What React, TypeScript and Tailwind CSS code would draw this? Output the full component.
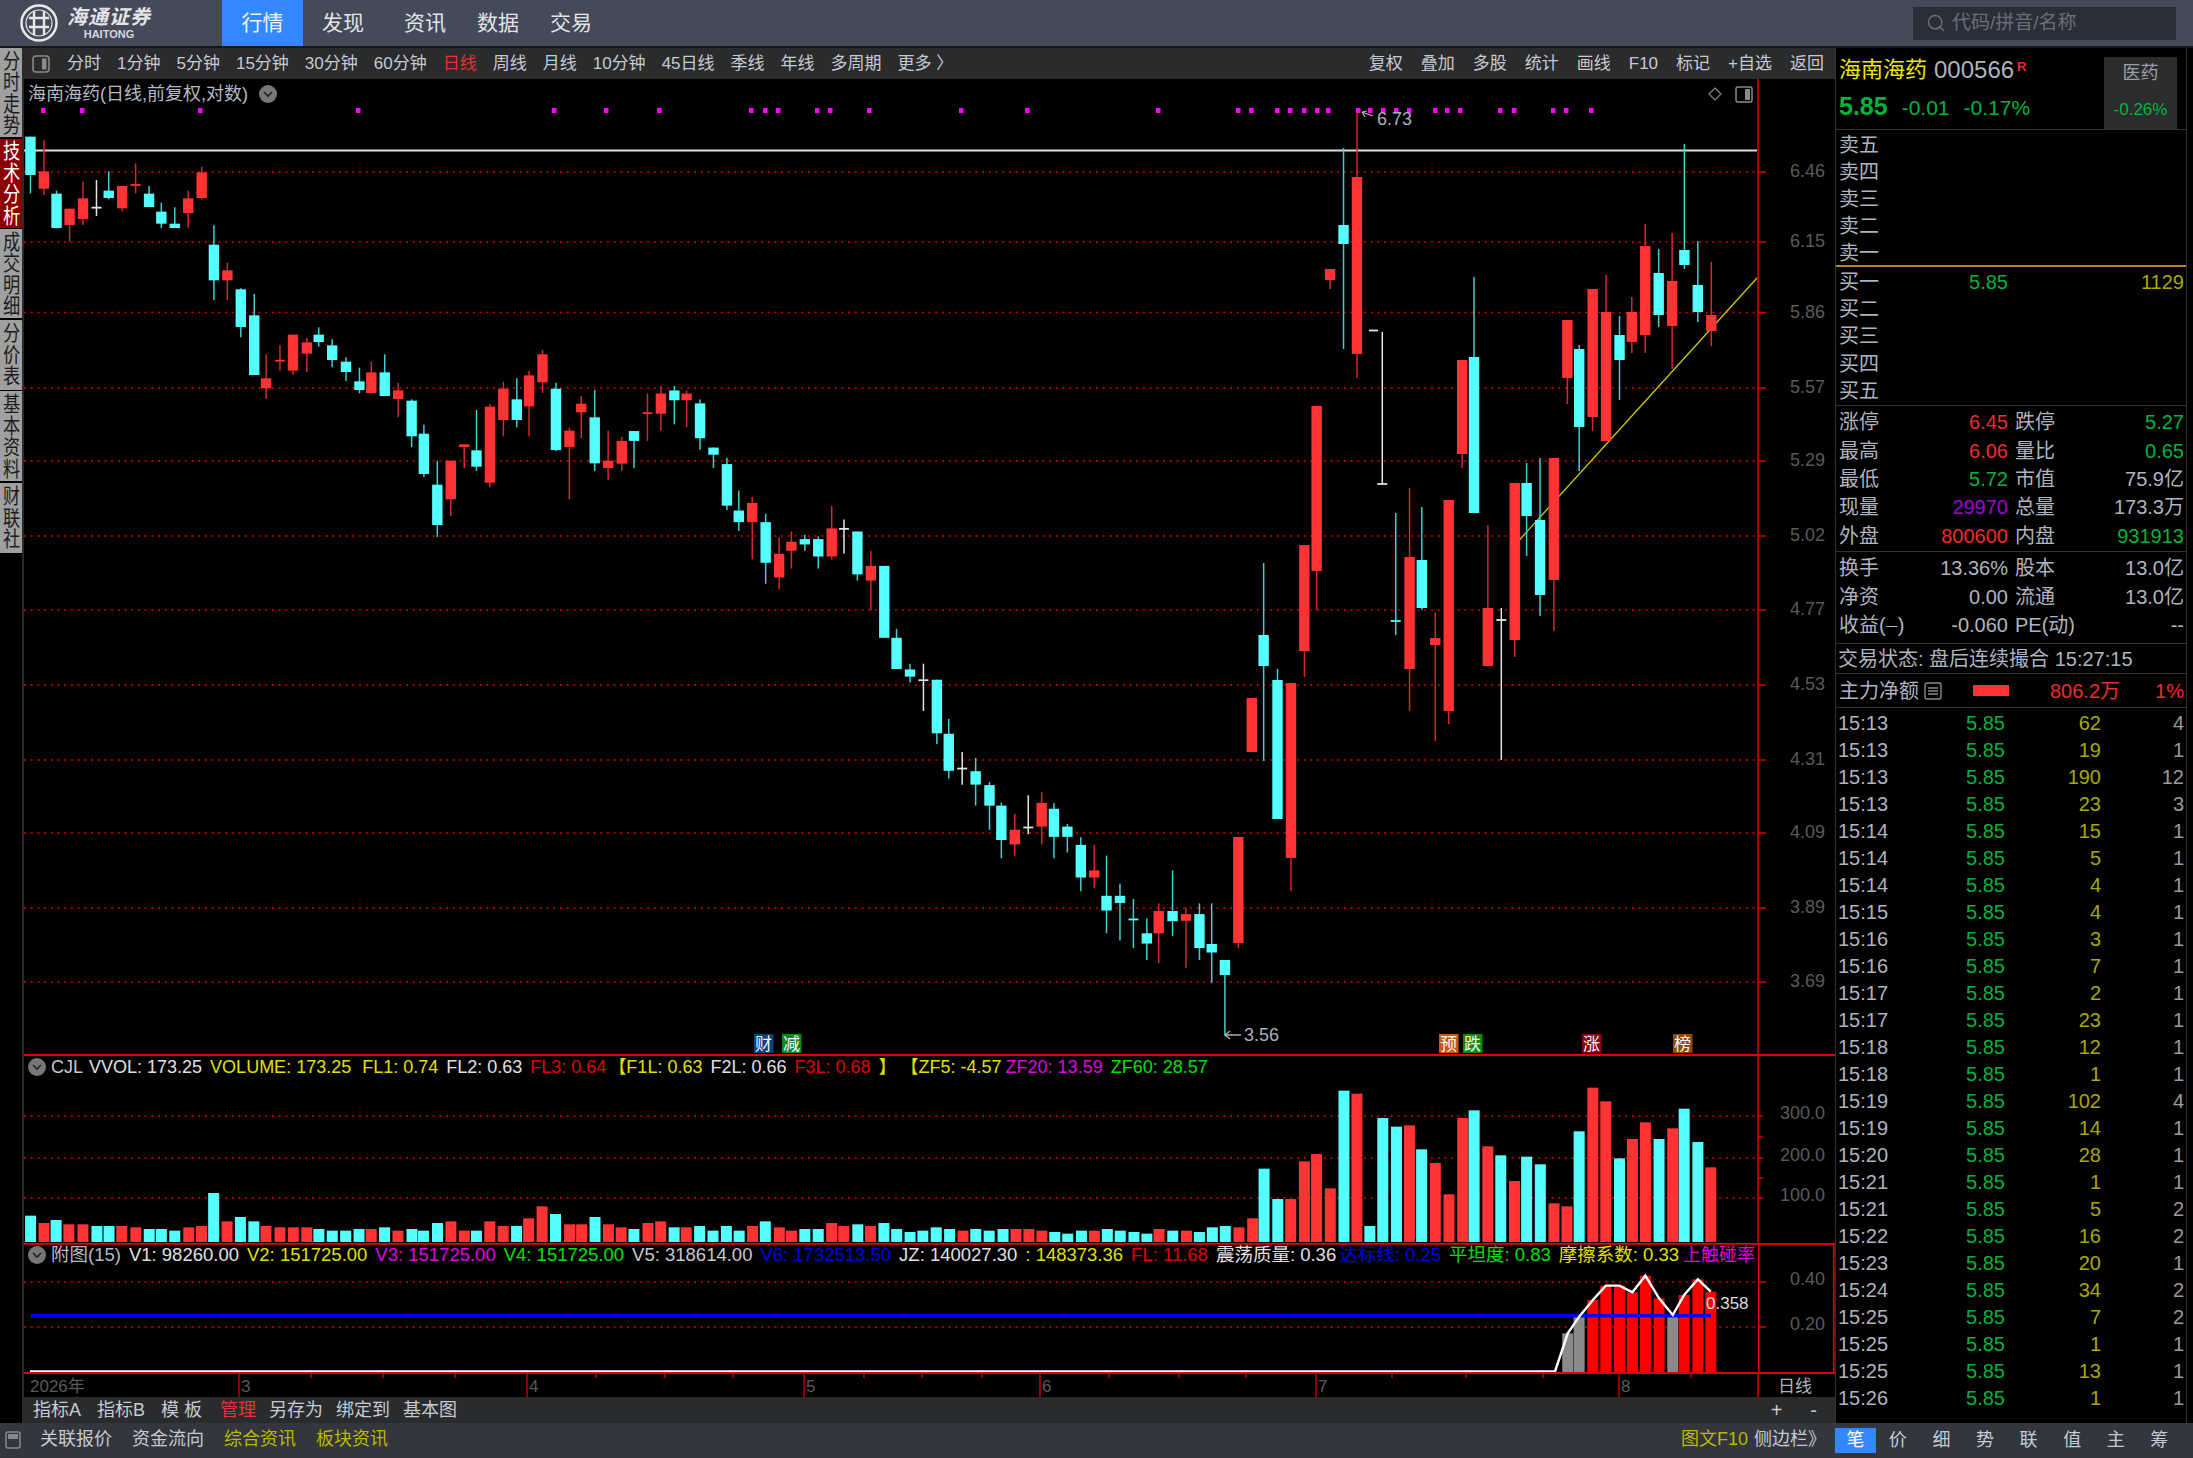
import type { ReactNode } from 'react';
import { Search } from 'lucide-react';

type Kind = 'c' | 'r' | 'w';
type Row = [number, number, number, number, number, Kind];

const CYAN = '#55ffff';
const RED = '#ff3333';

// candles are read off the chart in three stretches, each with its own scale
const part1: Row[] = [
  [77, 20, 190, 20, 135, 'c'], [111, 30, 195, 124, 176, 'r'], [143, 182, 295, 191, 294, 'c'], [176, 236, 335, 236, 285, 'r'],
  [210, 155, 285, 205, 267, 'r'], [244, 150, 258, 233, 233, 'w'], [275, 124, 208, 182, 204, 'c'], [309, 168, 244, 168, 235, 'r'],
  [343, 100, 190, 165, 165, 'r'], [377, 168, 231, 191, 231, 'c'], [408, 218, 294, 245, 281, 'c'], [442, 232, 294, 281, 294, 'c'],
  [476, 182, 294, 205, 249, 'r'], [510, 110, 208, 127, 204, 'r'], [541, 286, 510, 344, 451, 'c'], [575, 398, 510, 421, 451, 'r'],
  [609, 475, 622, 478, 591, 'c'], [643, 492, 735, 556, 735, 'c'], [673, 673, 806, 745, 775, 'r'], [708, 646, 722, 692, 692, 'r'],
  [741, 614, 735, 614, 722, 'r'], [776, 623, 726, 637, 671, 'r'], [806, 592, 650, 614, 636, 'c'], [840, 628, 712, 646, 690, 'c'],
  [875, 682, 753, 695, 726, 'c'], [909, 713, 790, 754, 780, 'c'], [939, 695, 790, 727, 789, 'r'], [973, 673, 798, 727, 798, 'c'],
  [1007, 758, 861, 781, 807, 'r'], [1041, 808, 951, 812, 919, 'c'], [1072, 884, 1041, 911, 1032, 'c'], [1106, 992, 1221, 1064, 1185, 'c'],
  [1140, 992, 1158, 992, 1108, 'r'], [1174, 943, 1014, 943, 951, 'r'], [1205, 840, 1023, 961, 1010, 'c'], [1239, 822, 1072, 830, 1058, 'r'],
  [1273, 755, 919, 776, 870, 'r'], [1307, 745, 892, 808, 870, 'c'], [1338, 722, 919, 736, 829, 'r'], [1372, 660, 789, 673, 757, 'r'],
  [1406, 758, 964, 776, 960, 'c'], [1440, 893, 1108, 902, 951, 'r'], [1470, 798, 924, 821, 847, 'r'], [1504, 780, 1023, 862, 1000, 'c'],
  [1538, 902, 1050, 992, 1014, 'r'],
];

const part2: Row[] = [
  [55, 217, 293, 226, 277, 'r'], [86, 204, 287, 204, 226, 'c'], [120, 120, 226, 164, 164, 'r'], [154, 103, 203, 120, 165, 'r'],
  [188, 103, 189, 113, 135, 'c'], [219, 113, 195, 120, 135, 'r'], [253, 133, 246, 142, 220, 'c'], [287, 241, 287, 241, 257, 'c'],
  [321, 264, 381, 278, 371, 'c'], [351, 337, 428, 382, 408, 'c'], [385, 351, 491, 365, 408, 'r'], [419, 389, 546, 408, 499, 'c'],
  [453, 442, 559, 479, 532, 'r'], [484, 429, 512, 452, 472, 'r'], [518, 436, 472, 446, 458, 'c'], [552, 440, 512, 446, 485, 'c'],
  [586, 372, 492, 422, 485, 'r'], [617, 402, 478, 423, 423, 'w'], [651, 429, 539, 429, 525, 'c'], [685, 472, 605, 506, 539, 'r'],
  [719, 506, 667, 506, 667, 'c'], [750, 647, 737, 667, 737, 'c'], [784, 725, 767, 738, 754, 'c'], [818, 725, 831, 762, 762, 'w'],
  [852, 761, 905, 761, 881, 'c'], [882, 849, 982, 882, 965, 'c'], [916, 923, 996, 960, 960, 'w'], [950, 936, 1043, 966, 996, 'c'],
  [985, 990, 1097, 997, 1043, 'c'], [1015, 1036, 1161, 1043, 1120, 'c'], [1049, 1061, 1155, 1097, 1130, 'r'], [1083, 1020, 1107, 1092, 1092, 'w'],
  [1117, 1013, 1130, 1037, 1090, 'r'], [1148, 1037, 1161, 1050, 1113, 'c'], [1182, 1084, 1148, 1090, 1113, 'c'], [1216, 1114, 1235, 1131, 1204, 'c'],
  [1250, 1131, 1228, 1188, 1204, 'r'], [1281, 1155, 1329, 1245, 1278, 'c'], [1315, 1218, 1345, 1245, 1261, 'c'], [1349, 1252, 1362, 1298, 1298, 'c'],
  [1383, 1296, 1389, 1329, 1352, 'c'], [1413, 1262, 1396, 1279, 1329, 'r'], [1448, 1188, 1335, 1279, 1302, 'c'], [1482, 1272, 1406, 1286, 1301, 'r'],
  [1516, 1262, 1389, 1286, 1362, 'c'], [1547, 1262, 1440, 1353, 1372, 'c'],
];

const part3: Row[] = [
  [63, 960, 1036, 960, 975, 'c'], [97, 837, 948, 837, 943, 'r'], [131, 698, 752, 698, 752, 'r'], [161, 563, 761, 635, 666, 'c'],
  [196, 669, 819, 680, 819, 'c'], [230, 683, 891, 683, 858, 'r'], [264, 545, 677, 545, 651, 'r'], [295, 406, 610, 406, 571, 'r'],
  [329, 269, 289, 269, 280, 'r'], [363, 148, 349, 225, 244, 'c'], [397, 112, 378, 177, 354, 'r'], [461, 332, 484, 484, 484, 'w'],
  [495, 513, 635, 621, 621, 'c'], [530, 488, 711, 557, 669, 'r'], [561, 507, 610, 560, 608, 'c'], [595, 613, 741, 638, 645, 'r'],
  [629, 500, 724, 500, 711, 'r'], [663, 360, 468, 360, 454, 'r'], [693, 277, 513, 357, 513, 'c'], [728, 525, 666, 608, 666, 'r'],
  [762, 608, 760, 620, 620, 'w'], [796, 483, 657, 483, 640, 'r'], [826, 463, 556, 483, 516, 'c'], [860, 458, 616, 520, 595, 'c'],
  [895, 458, 631, 458, 580, 'r'], [929, 320, 404, 320, 378, 'r'], [959, 345, 471, 349, 427, 'c'], [993, 289, 431, 289, 417, 'r'],
  [1027, 275, 441, 312, 441, 'r'], [1061, 316, 400, 335, 360, 'c'], [1092, 297, 353, 312, 342, 'r'], [1126, 224, 353, 246, 335, 'r'],
  [1160, 249, 327, 273, 315, 'c'], [1194, 233, 369, 281, 326, 'r'], [1225, 144, 269, 250, 265, 'c'], [1259, 241, 322, 285, 312, 'c'],
  [1293, 262, 346, 315, 331, 'r'],
];

const candles: Row[] = [
  ...part1.map(([x, h, l, t, b, k]): Row => [x / 2.529, 130 + h / 3, 130 + l / 3, 130 + t / 3, 130 + b / 3, k]),
  ...part2.map(([x, h, l, t, b, k]): Row => [600 + x / 2.529, 340 + h / 2.24, 340 + l / 2.24, 340 + t / 2.24, 340 + b / 2.24, k]),
  ...part3.map(([x, h, l, t, b, k]): Row => [1200 + x / 2.529, h, l, t, b, k]),
];

const priceGrid: [number, string][] = [
  [172, '6.46'], [242, '6.15'], [312.5, '5.86'], [388, '5.57'], [461, '5.29'], [536, '5.02'],
  [610, '4.77'], [685, '4.53'], [760, '4.31'], [833, '4.09'], [908, '3.89'], [982, '3.69'],
];

const dots = [
  43, 82, 200, 358, 554, 606, 659, 751, 765, 778, 817, 830, 869, 961, 1027, 1158, 1238, 1251, 1277, 1290, 1304, 1317,
  1328, 1358, 1370, 1383, 1396, 1409, 1435, 1447, 1460, 1500, 1514, 1553, 1566, 1591,
];

const volA: [number, number, 'c' | 'r'][] = [
  [48, 527, 'c'], [69, 549, 'r'], [88, 540, 'c'], [108, 553, 'r'], [130, 553, 'r'], [152, 558, 'c'], [171, 558, 'c'], [191, 558, 'r'],
  [213, 562, 'r'], [234, 567, 'c'], [253, 567, 'c'], [274, 572, 'c'], [296, 562, 'r'], [316, 558, 'r'], [335, 459, 'c'], [356, 544, 'r'],
  [377, 531, 'c'], [398, 544, 'c'], [417, 558, 'r'], [439, 562, 'r'], [460, 562, 'r'], [481, 562, 'r'], [500, 567, 'c'], [521, 572, 'c'],
  [542, 572, 'c'], [563, 567, 'c'], [582, 567, 'r'], [603, 562, 'c'], [624, 572, 'r'], [646, 567, 'c'], [664, 572, 'c'], [686, 549, 'c'],
  [707, 544, 'r'], [728, 572, 'r'], [747, 572, 'c'], [768, 544, 'r'], [789, 558, 'r'], [810, 558, 'c'], [829, 535, 'r'], [850, 499, 'r'],
  [871, 522, 'c'], [893, 553, 'r'], [912, 553, 'r'], [933, 531, 'c'], [954, 553, 'r'], [974, 562, 'r'], [994, 567, 'c'], [1016, 549, 'r'],
  [1036, 544, 'r'], [1057, 562, 'c'], [1076, 562, 'r'], [1097, 558, 'c'], [1118, 572, 'c'], [1139, 558, 'c'], [1159, 572, 'c'], [1180, 558, 'r'],
  [1200, 544, 'c'], [1222, 562, 'r'], [1241, 572, 'r'], [1262, 567, 'c'], [1283, 567, 'c'], [1304, 549, 'r'], [1323, 558, 'r'], [1345, 553, 'c'],
  [1365, 558, 'r'], [1386, 549, 'c'], [1406, 567, 'c'], [1427, 576, 'c'], [1447, 572, 'c'], [1468, 562, 'c'], [1489, 567, 'c'], [1510, 572, 'r'],
  [1530, 567, 'c'], [1551, 572, 'c'],
];

const volB: [number, number, 'c' | 'r'][] = [
  [4, 567, 'c'], [21, 567, 'r'], [38, 567, 'r'], [55, 572, 'r'], [72, 576, 'c'], [89, 581, 'c'], [107, 572, 'c'], [124, 572, 'r'],
  [141, 567, 'c'], [158, 572, 'c'], [176, 576, 'c'], [193, 581, 'c'], [209, 567, 'r'], [227, 572, 'c'], [245, 572, 'r'], [262, 576, 'c'],
  [279, 562, 'c'], [296, 558, 'c'], [314, 562, 'r'], [332, 535, 'r'], [347, 386, 'c'], [365, 477, 'c'], [382, 477, 'r'], [400, 364, 'r'],
  [416, 342, 'r'], [434, 445, 'r'], [452, 152, 'c'], [469, 161, 'r'], [486, 558, 'c'], [503, 234, 'c'], [521, 260, 'c'], [538, 256, 'r'],
  [554, 328, 'c'], [572, 369, 'r'], [590, 463, 'r'], [608, 234, 'r'], [623, 211, 'c'], [641, 319, 'r'], [658, 346, 'c'], [676, 423, 'r'],
  [692, 350, 'c'], [710, 373, 'c'], [728, 490, 'r'], [745, 499, 'r'], [761, 274, 'c'], [779, 143, 'r'], [796, 184, 'r'], [814, 355, 'c'],
  [831, 297, 'r'], [848, 247, 'r'], [866, 297, 'c'], [884, 265, 'r'], [899, 206, 'c'], [917, 306, 'c'], [934, 382, 'r'],
];

const volumes = [
  ...volA.map(([x, y, k]) => ({ x: x / 1.568, y: 1040 + y / 3, k })),
  ...volB.map(([x, y, k]) => ({ x: 1000 + x / 1.314, y: 1040 + y / 3, k })),
];

const subBars: [number, number, string][] = [
  [746, 880, '#8a8a8a'], [761, 830, '#8a8a8a'], [779, 780, '#ff0000'], [796, 737, '#ff0000'], [814, 737, '#ff0000'], [831, 757, '#ff0000'],
  [848, 707, '#ff0000'], [866, 775, '#ff0000'], [884, 825, '#8a8a8a'], [899, 765, '#ff0000'], [917, 718, '#ff0000'], [934, 755, '#ff0000'],
];

const ticks: [string, string, string][] = [
  ['15:13', '62', '4'], ['15:13', '19', '1'], ['15:13', '190', '12'], ['15:13', '23', '3'], ['15:14', '15', '1'], ['15:14', '5', '1'],
  ['15:14', '4', '1'], ['15:15', '4', '1'], ['15:16', '3', '1'], ['15:16', '7', '1'], ['15:17', '2', '1'], ['15:17', '23', '1'],
  ['15:18', '12', '1'], ['15:18', '1', '1'], ['15:19', '102', '4'], ['15:19', '14', '1'], ['15:20', '28', '1'], ['15:21', '1', '1'],
  ['15:21', '5', '2'], ['15:22', '16', '2'], ['15:23', '20', '1'], ['15:24', '34', '2'], ['15:25', '7', '2'], ['15:25', '1', '1'],
  ['15:25', '13', '1'], ['15:26', '1', '1'],
];

const sideTabs = [
  { text: '分时走势', h: 'h-[89px]' },
  { text: '技术分析', h: 'h-[89px]', active: true },
  { text: '成交明细', h: 'h-[89px]' },
  { text: '分价表', h: 'h-[70px]' },
  { text: '基本资料', h: 'h-[90px]' },
  { text: '财联社', h: 'h-[70px]' },
];

const periods = ['分时', '1分钟', '5分钟', '15分钟', '30分钟', '60分钟', '日线', '周线', '月线', '10分钟', '45日线', '季线', '年线', '多周期', '更多 〉'];
const tools = ['复权', '叠加', '多股', '统计', '画线', 'F10', '标记', '+自选', '返回'];
const bookSell = ['卖五', '卖四', '卖三', '卖二', '卖一'];
const bookBuy = ['买一', '买二', '买三', '买四', '买五'];

const GREEN = 'text-[#00b33c]';
const PINK = 'text-[#ef2b2b]';
const GRAY = 'text-[#aeb4be]';

function Stat({ a, av, ac, b, bv, bc }: { a: ReactNode; av: string; ac: string; b: string; bv: string; bc: string }) {
  return (
    <div className="flex h-[28.4px] shrink-0 items-center pl-[3px] pr-[2px] text-[20px] leading-none">
      <div className="flex w-[169px] justify-between">
        <span className={GRAY}>{a}</span>
        <span className={ac}>{av}</span>
      </div>
      <div className="ml-[7px] flex flex-1 justify-between">
        <span className={GRAY}>{b}</span>
        <span className={bc}>{bv}</span>
      </div>
    </div>
  );
}

function Logo() {
  return (
    <svg width="40" height="40" viewBox="0 0 40 40" fill="none" stroke="#e8e8ea" className="shrink-0">
      <circle cx="20" cy="20" r="17.5" strokeWidth="2.5" />
      <circle cx="20" cy="20" r="13" strokeWidth="1.2" />
      <path d="M10 15h20M10 24h20M15 8v24M25 8v24" strokeWidth="2.4" />
      <path d="M15 15h10v9H15z" strokeWidth="1.6" />
    </svg>
  );
}

function PanelIcon({ className }: { className: string }) {
  return (
    <svg width="18" height="18" viewBox="0 0 18 18" fill="none" className={className}>
      <rect x="1" y="1" width="16" height="16" rx="3" stroke="#8a8a8a" strokeWidth="1.6" />
      <rect x="10" y="3.5" width="4.5" height="11" fill="#8a8a8a" />
    </svg>
  );
}

function RoundToggle() {
  return (
    <svg width="18" height="18" viewBox="0 0 18 18" className="shrink-0">
      <circle cx="9" cy="9" r="9" fill="#777" />
      <path d="M5 7l4 4 4-4" fill="none" stroke="#222" strokeWidth="1.6" />
    </svg>
  );
}

function Candle({ row }: { row: Row }) {
  const [x, hi, lo, top, bot, k] = row;
  const wick = k === 'c' ? '#3fd0d0' : k === 'r' ? '#d92626' : '#e4e4e4';
  const fill = k === 'c' ? CYAN : k === 'r' ? RED : '#e4e4e4';
  return (
    <g>
      <line x1={x} x2={x} y1={hi} y2={lo} stroke={wick} strokeWidth="1.5" />
      {top === bot ? (
        <line x1={x - 5} x2={x + 5} y1={top} y2={top} stroke={fill} strokeWidth="1.8" />
      ) : (
        <rect x={x - 5.2} y={top} width={10.4} height={bot - top} fill={fill} />
      )}
    </g>
  );
}

function GridLine({ y }: { y: number }) {
  return <line x1="24" x2="1758" y1={y} y2={y} stroke="#dd0000" strokeWidth="1.6" strokeDasharray="2 4.7" />;
}

function MainChart() {
  return (
    <svg width="1811" height="977" viewBox="24 79 1811 977" className="block">
      {priceGrid.map(([y, label]) => (
        <g key={label}>
          <GridLine y={y} />
          <line x1="1758" x2="1766" y1={y} y2={y} stroke="#d00000" strokeWidth="1.5" />
          <text x="1790" y={y + 5} fontSize="18" fill="#5a5a5a">{label}</text>
        </g>
      ))}
      {dots.map((x) => (
        <rect key={x} x={x - 2} y="108" width="4.5" height="5" fill="#ff00ff" />
      ))}
      <line x1="24" x2="1757" y1="150.5" y2="150.5" stroke="#dddddd" strokeWidth="1.8" />
      <line x1="1513" y1="547" x2="1757" y2="278" stroke="#cccc00" strokeWidth="1.3" />
      {candles.map((row, i) => (
        <Candle key={i} row={row} />
      ))}
      <line x1="1369" x2="1378" y1="330.5" y2="330.5" stroke="#e4e4e4" strokeWidth="1.8" />
      <path d="M1362 112l11 4M1362 112l3 5M1362 112l5-1" stroke="#bbb" strokeWidth="1.2" fill="none" />
      <text x="1377" y="125" fontSize="18" fill="#aab0b8">6.73</text>
      <path d="M1225 1035h16M1225 1035l5-4M1225 1035l5 4" stroke="#aaa" strokeWidth="1.4" fill="none" />
      <text x="1244" y="1041" fontSize="18" fill="#aab0b8">3.56</text>
      {[
        [754, '财', '#0b3f7e'],
        [782, '减', '#0a8a1a'],
        [1439, '预', '#c65a14'],
        [1463, '跌', '#0a8a0a'],
        [1582, '涨', '#8b0010'],
        [1673, '榜', '#8a4a10'],
      ].map(([x, t, c]) => (
        <g key={t as string}>
          <rect x={x as number} y="1034" width="19.5" height="19" fill={c as string} />
          <text x={(x as number) + 1} y="1050" fontSize="17" fill="#f4f4f4">{t}</text>
        </g>
      ))}
      <line x1="1758" x2="1758" y1="79" y2="1056" stroke="#d00000" strokeWidth="1.6" />
      <line x1="24" x2="1835" y1="1055" y2="1055" stroke="#e00000" strokeWidth="2" />
      <path d="M1715 88l6 6-6 6-6-6z" fill="none" stroke="#888" strokeWidth="1.2" />
      <rect x="1736" y="87" width="16" height="15" rx="2" fill="none" stroke="#8a8a8a" strokeWidth="1.5" />
      <rect x="1745" y="89" width="5" height="11" fill="#8a8a8a" />
    </svg>
  );
}

function VolumeChart() {
  return (
    <svg width="1811" height="187" viewBox="24 1056 1811 187" className="block">
      {([[1116, '300.0'], [1158, '200.0'], [1198, '100.0']] as [number, string][]).map(([y, label]) => (
        <g key={label}>
          <GridLine y={y} />
          <text x="1780" y={y + 3} fontSize="18" fill="#5a5a5a">{label}</text>
        </g>
      ))}
      {[1116, 1137, 1158, 1178, 1198].map((y) => (
        <line key={y} x1="1758" x2="1763" y1={y} y2={y} stroke="#d00000" strokeWidth="1.5" />
      ))}
      {volumes.map((v, i) => (
        <rect key={i} x={v.x - 5.5} y={v.y} width="11" height={1242 - v.y} fill={v.k === 'c' ? CYAN : RED} />
      ))}
      <line x1="1758" x2="1758" y1="1056" y2="1243" stroke="#d00000" strokeWidth="1.6" />
    </svg>
  );
}

function SubChart() {
  const pts = [[30, 1371.5], [1555, 1371.5], ...subBars.map(([x, y]) => [1000 + x / 1.314, 1040 + y / 3])];
  return (
    <svg width="1811" height="131" viewBox="24 1243 1811 131" className="block">
      {([[1282, '0.40'], [1327, '0.20']] as [number, string][]).map(([y, label]) => (
        <g key={label}>
          <GridLine y={y} />
          <line x1="1758" x2="1766" y1={y} y2={y} stroke="#d00000" strokeWidth="1.5" />
          <text x="1790" y={y + 3} fontSize="18" fill="#5a5a5a">{label}</text>
        </g>
      ))}
      {subBars.map(([x, y, c]) => (
        <rect key={x} x={1000 + x / 1.314 - 5.5} y={1040 + y / 3} width="11" height={1372 - (1040 + y / 3)} fill={c} />
      ))}
      <line x1="31" x2="1711" y1="1315.7" y2="1315.7" stroke="#0000ff" strokeWidth="3.5" />
      <polyline points={pts.map((p) => p.join(',')).join(' ')} fill="none" stroke="#ffffff" strokeWidth="2.4" />
      <text x="1706" y="1309" fontSize="17" fill="#dddddd">0.358</text>
      <line x1="24" x2="1835" y1="1373" y2="1373" stroke="#e00000" strokeWidth="2" />
      <line x1="24" x2="1835" y1="1243.5" y2="1243.5" stroke="#e00000" strokeWidth="2.5" />
      <rect x="1758.7" y="1244" width="75" height="129" fill="none" stroke="#e00000" strokeWidth="1.6" />
    </svg>
  );
}

function TimeAxis() {
  const minor = [311, 383, 455, 596, 665, 733, 864, 922, 982, 1109, 1179, 1246, 1392, 1466, 1543, 1691];
  const months: [number, string][] = [[239, '3'], [527, '4'], [804, '5'], [1040, '6'], [1316, '7'], [1619, '8']];
  return (
    <svg width="1811" height="23" viewBox="24 1374 1811 23" className="block shrink-0">
      {minor.map((x) => (
        <line key={x} x1={x} x2={x} y1="1374" y2="1378" stroke="#d00000" strokeWidth="1.4" />
      ))}
      {months.map(([x, t]) => (
        <g key={t}>
          <line x1={x} x2={x} y1="1374" y2="1397" stroke="#d00000" strokeWidth="1.4" />
          <text x={x + 2} y="1392" fontSize="17" fill="#5a5a5a">{t}</text>
        </g>
      ))}
      <text x="30" y="1392" fontSize="17" fill="#5a5a5a">2026年</text>
      <line x1="1758" x2="1758" y1="1374" y2="1397" stroke="#d00000" strokeWidth="1.6" />
      <text x="1778" y="1392" fontSize="17" fill="#aeb4be">日线</text>
    </svg>
  );
}

export default function App() {
  return (
    <div className="flex h-[1458px] w-[2193px] flex-col overflow-hidden bg-black font-['Liberation_Sans','Noto_Sans_CJK_SC',sans-serif]">
      {/* Top nav */}
      <div className="flex h-[48px] shrink-0 items-stretch border-b-2 border-[#15171b] bg-[#444a58]">
        <div className="flex w-[222px] items-center gap-[8px] pl-[19px]">
          <Logo />
          <div className="flex flex-col items-center leading-none">
            <span className="font-['Liberation_Serif','Noto_Sans_CJK_SC',serif] text-[20px] font-bold italic tracking-[1px] text-[#e4e4e8]">海通证券</span>
            <span className="mt-[2px] text-[11px] font-bold text-[#d8d8dc]">HAITONG</span>
          </div>
        </div>
        <div className="flex w-[81px] items-center justify-center bg-[#3388ff] text-[21px] text-[#eef4ff]">行情</div>
        <div className="flex items-center gap-[31px] pl-[19px] text-[21px] text-[#e2e4ea]">
          <span className="mr-[9px]">发现</span>
          <span>资讯</span>
          <span>数据</span>
          <span>交易</span>
        </div>
        <div className="ml-auto mr-[17px] flex h-[33px] w-[263px] items-center self-center bg-[#2a2e38] pl-[13px] text-[19px] text-[#6a6e78]">
          <Search size={20} strokeWidth={1.8} />
          <span className="ml-[6px]">代码/拼音/名称</span>
        </div>
      </div>

      <div className="flex min-h-0 flex-1">
        {/* Left tabs */}
        <div className="flex w-[24px] shrink-0 flex-col gap-[1.5px] border-r-2 border-[#2a2a2a]">
          {sideTabs.map((t) => (
            <div
              key={t.text}
              className={`flex w-[22px] shrink-0 flex-col items-center justify-center overflow-hidden text-[21px] leading-[21.5px] ${t.h} ${t.active ? 'bg-[#8b0000] text-white' : 'bg-[#a0a0a0] text-[#1c1c1c]'}`}
            >
              {t.text.split('').map((c, i) => (
                <span key={i} className="scale-x-[0.82]">{c}</span>
              ))}
            </div>
          ))}
        </div>

        {/* Center */}
        <div className="flex w-[1811px] shrink-0 flex-col">
          <div className="flex h-[31px] shrink-0 items-center bg-[#2a2b2d] text-[17px] text-[#c6cad2]">
            <PanelIcon className="ml-[8px] mr-[17px]" />
            <div className="flex gap-[16px]">
              {periods.map((p) => (
                <span key={p} className={p === '日线' ? 'text-[#e83030]' : ''}>{p}</span>
              ))}
            </div>
            <div className="ml-auto flex gap-[18px] pr-[11px]">
              {tools.map((t) => (
                <span key={t}>{t}</span>
              ))}
            </div>
          </div>

          <div className="relative shrink-0">
            <MainChart />
            <div className="absolute left-[4px] top-[5px] flex items-center gap-[11px] text-[18px] leading-[20px] text-[#b4bac4]">
              <span>海南海药(日线,前复权,对数)</span>
              <RoundToggle />
            </div>
          </div>

          <div className="relative shrink-0">
            <VolumeChart />
            <div className="absolute left-[4px] top-[1px] flex items-center gap-[8px] whitespace-nowrap text-[18px] leading-[20px]">
              <RoundToggle />
              <span className="-ml-[3px] -mr-[2px] text-[#c8c8c8]">CJL</span>
              <span className="text-[#e0e0e0]">VVOL: 173.25</span>
              <span className="mr-[3px] text-[#e0e000]">VOLUME: 173.25</span>
              <span className="text-[#e0e000]">FL1: 0.74</span>
              <span className="text-[#e0e0e0]">FL2: 0.63</span>
              <span className="text-[#e00000]">FL3: 0.64</span>
              <span className="-ml-[6px] text-[#e0e000]">【F1L: 0.63</span>
              <span className="text-[#e0e0e0]">F2L: 0.66</span>
              <span className="text-[#e00000]">F3L: 0.68</span>
              <span className="text-[#e0e000]">】</span>
              <span className="-ml-[4px] text-[#e0e000]">【ZF5: -4.57</span>
              <span className="-ml-[4px] text-[#e000e0]">ZF20: 13.59</span>
              <span className="text-[#00e000]">ZF60: 28.57</span>
            </div>
          </div>

          <div className="relative shrink-0">
            <SubChart />
            <div className="absolute left-[4px] top-[2px] flex w-[1731px] items-center gap-[8px] whitespace-nowrap text-[18.5px] leading-[20px]">
              <RoundToggle />
              <span className="-ml-[3px] text-[#b4bac4]">附图(15)</span>
              <span className="text-[#e0e0e0]">V1: 98260.00</span>
              <span className="text-[#e0e000]">V2: 151725.00</span>
              <span className="text-[#e000e0]">V3: 151725.00</span>
              <span className="text-[#00e000]">V4: 151725.00</span>
              <span className="text-[#c8c8c8]">V5: 318614.00</span>
              <span className="text-[#0000e0]">V6: 1732513.50</span>
              <span className="text-[#e0e0e0]">JZ: 140027.30</span>
              <span className="text-[#e0e000]">: 148373.36</span>
              <span className="text-[#e00000]">FL: 11.68</span>
              <span className="text-[#e0e0e0]">震荡质量: 0.36</span>
              <span className="-ml-[5px] text-[#0000e0]">达标线: 0.25</span>
              <span className="text-[#00e000]">平坦度: 0.83</span>
              <span className="text-[#e0e000]">摩擦系数: 0.33</span>
              <span className="-ml-[4px] text-[18px] text-[#e000e0]">上触碰率</span>
            </div>
          </div>

          <TimeAxis />

          <div className="flex min-h-0 flex-1 items-center gap-[13px] bg-[#2a2b2d] pl-[9px] text-[18px] leading-none text-[#c6cad2]">
            <span>指标A</span>
            <span className="ml-[3px]">指标B</span>
            <span className="ml-[3px]">模 板</span>
            <span className="ml-[5px] text-[#ef3030]">管理</span>
            <span>另存为</span>
            <span>绑定到</span>
            <span>基本图</span>
            <span className="ml-auto pr-[15px] text-[20px]">+</span>
            <span className="pr-[18px] text-[20px]">-</span>
          </div>
        </div>

        {/* Right panel */}
        <div className="flex w-[352px] shrink-0 flex-col border-x border-[#333333]">
          <div className="flex h-[82px] shrink-0 border-b border-[#333333] pl-[3px] pt-[9px]">
            <div className="flex flex-col">
              <div className="flex items-start leading-none">
                <span className="text-[22px] leading-[26px] text-[#e8e800]">海南海药</span>
                <span className="ml-[7px] text-[24px] leading-[26px] text-[#aeb4be]">000566</span>
                <span className="ml-[3px] mt-[3px] text-[13px] font-bold text-[#ef2b2b]">R</span>
              </div>
              <div className="mt-[11px] flex items-baseline gap-[14px]">
                <span className="text-[25px] font-bold leading-none text-[#00b33c]">5.85</span>
                <span className={`text-[21px] leading-none ${GREEN}`}>-0.01</span>
                <span className={`text-[21px] leading-none ${GREEN}`}>-0.17%</span>
              </div>
            </div>
            <div className="ml-auto mr-[9px] flex h-[72px] w-[73px] flex-col items-center justify-between bg-[#2c2c2e] pb-[11px] pt-[7px] leading-none">
              <span className="text-[18px] text-[#9aa0aa]">医药</span>
              <span className={`text-[17px] ${GREEN}`}>-0.26%</span>
            </div>
          </div>

          <div className="flex h-[137px] shrink-0 flex-col border-b-2 border-[#b8861a] pl-[3px] pt-[1.5px] text-[20px] text-[#aeb4be]">
            {bookSell.map((t) => (
              <div key={t} className="flex h-[27px] shrink-0 items-center">{t}</div>
            ))}
          </div>

          <div className="flex h-[139px] shrink-0 flex-col border-b border-[#333333] pl-[3px] pr-[2px] pt-[1px] text-[20px] text-[#aeb4be]">
            {bookBuy.map((t, i) => (
              <div key={t} className="flex h-[27.4px] shrink-0 items-center">
                <span className="w-[130px]">{t}</span>
                {i === 0 && <span className={`w-[39px] text-right ${GREEN}`}>5.85</span>}
                {i === 0 && <span className="ml-auto text-[#a8a800]">1129</span>}
              </div>
            ))}
          </div>

          <div className="flex h-[146px] shrink-0 flex-col border-b border-[#333333] pt-[2px]">
            <Stat a="涨停" av="6.45" ac={PINK} b="跌停" bv="5.27" bc={GREEN} />
            <Stat a="最高" av="6.06" ac={PINK} b="量比" bv="0.65" bc={GREEN} />
            <Stat a="最低" av="5.72" ac={GREEN} b="市值" bv="75.9亿" bc={GRAY} />
            <Stat a="现量" av="29970" ac="text-[#a000d0]" b="总量" bv="173.3万" bc={GRAY} />
            <Stat a="外盘" av="800600" ac={PINK} b="内盘" bv="931913" bc={GREEN} />
          </div>

          <div className="flex h-[92px] shrink-0 flex-col border-b border-[#333333] pt-[2px]">
            <Stat a="换手" av="13.36%" ac={GRAY} b="股本" bv="13.0亿" bc={GRAY} />
            <Stat a="净资" av="0.00" ac={GRAY} b="流通" bv="13.0亿" bc={GRAY} />
            <Stat a={<>收益(<span className="text-[12px]">一</span>)</>} av="-0.060" ac={GRAY} b="PE(动)" bv="--" bc={GRAY} />
          </div>

          <div className="flex h-[30px] shrink-0 items-center border-b border-[#333333] pl-[2px] text-[20px] text-[#aeb4be]">
            交易状态: 盘后连续撮合 15:27:15
          </div>

          <div className="flex h-[34px] shrink-0 items-center border-b border-[#333333] pl-[3px] pr-[2px] text-[20px] text-[#aeb4be]">
            <span>主力净额</span>
            <svg width="18" height="18" viewBox="0 0 18 18" fill="none" stroke="#8a8a8a" className="ml-[5px]">
              <rect x="1" y="1" width="16" height="16" rx="2" strokeWidth="1.4" />
              <path d="M4 6h10M4 9h10M4 12h10" strokeWidth="1.4" />
            </svg>
            <span className="ml-[31px] h-[11px] w-[36px] bg-[#ff3333]" />
            <span className={`ml-[41px] ${PINK}`}>806.2万</span>
            <span className={`ml-auto ${PINK}`}>1%</span>
          </div>

          <div className="flex flex-col pt-[1px] text-[20px]">
            {ticks.map(([time, vol, n], i) => (
              <div key={i} className="flex h-[27px] shrink-0 items-center pl-[2px] pr-[2px]">
                <span className="w-[128px] text-[#aeb4be]">{time}</span>
                <span className={`w-[39px] text-right ${GREEN}`}>5.85</span>
                <span className="w-[96px] text-right text-[#a8a800]">{vol}</span>
                <span className="flex-1 text-right text-[#9a9a9a]">{n}</span>
              </div>
            ))}
          </div>
        </div>
      </div>

      {/* Bottom bar */}
      <div className="flex h-[35px] shrink-0 items-center bg-[#33363c] pb-[2px] text-[18px] text-[#c6cad2]">
        <svg width="16" height="18" viewBox="0 0 16 18" fill="none" className="ml-[5px] mr-[19px]">
          <rect x="1" y="1" width="14" height="16" rx="2" stroke="#8a8a8a" strokeWidth="1.5" />
          <rect x="3" y="3" width="10" height="5" fill="#8a8a8a" />
        </svg>
        <div className="flex gap-[20px]">
          <span>关联报价</span>
          <span>资金流向</span>
          <span className="text-[#b8b800]">综合资讯</span>
          <span className="text-[#b8b800]">板块资讯</span>
        </div>
        <span className="ml-auto text-[#b8b800]">图文F10</span>
        <span className="ml-[6px] mr-[9px]">侧边栏》</span>
        <div className="flex w-[358px] items-center self-stretch pb-[1px] pt-[3px] text-[#c6cad2]">
          <div className="flex h-[25px] w-[41px] items-center justify-center bg-[#3388ff] text-white">笔</div>
          <div className="flex flex-1">
            {['价', '细', '势', '联', '值', '主', '筹'].map((t) => (
              <span key={t} className="flex w-[43.6px] justify-center">{t}</span>
            ))}
          </div>
        </div>
      </div>
    </div>
  );
}
